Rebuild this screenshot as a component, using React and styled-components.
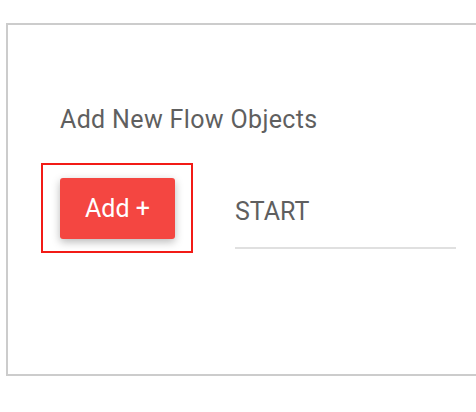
import React from 'react';
import styled, { createGlobalStyle } from 'styled-components';

const Global = createGlobalStyle`
  body {
    margin: 0;
    background: #fff;
    font-family: Roboto, "Liberation Sans", sans-serif;
    overflow: hidden;
  }
`;

const Panel = styled.div`
  margin: 23px 0 0 6px;
  width: 520px;
  height: 349px;
  border: 2px solid #cccccc;
  box-sizing: content-box;
`;

const Inner = styled.div`
  padding: 80px 0 0 52px;
`;

const Title = styled.div`
  font-size: 25px;
  letter-spacing: 0.35px;
  color: #5f5f5f;
  line-height: 30px;
  margin-bottom: 28px;
`;

const Row = styled.div`
  display: flex;
  align-items: flex-start;
  margin-left: -19px;
`;

const Highlight = styled.div`
  border: 2px solid #f21b16;
  padding: 13px 16px 12px 17px;
`;

const Button = styled.button`
  width: 115px;
  height: 61px;
  background: #f44641;
  color: #fff;
  border: none;
  border-radius: 3px;
  font-family: Roboto, "Liberation Sans", sans-serif;
  font-size: 25px;
  box-shadow: 0 3px 8px rgba(0, 0, 0, 0.28);
  padding: 0;
`;

const Field = styled.div`
  margin-left: 42px;
  margin-top: 33px;
  width: 221px;
  border-bottom: 2px solid #e0e0e0;
  padding-bottom: 19px;
  font-size: 25px;
  line-height: 32px;
  color: #5f5f5f;
`;

export default function App() {
  return (
    <>
      <Global />
      <Panel>
        <Inner>
          <Title>Add New Flow Objects</Title>
          <Row>
            <Highlight>
              <Button>Add +</Button>
            </Highlight>
            <Field>START</Field>
          </Row>
        </Inner>
      </Panel>
    </>
  );
}
